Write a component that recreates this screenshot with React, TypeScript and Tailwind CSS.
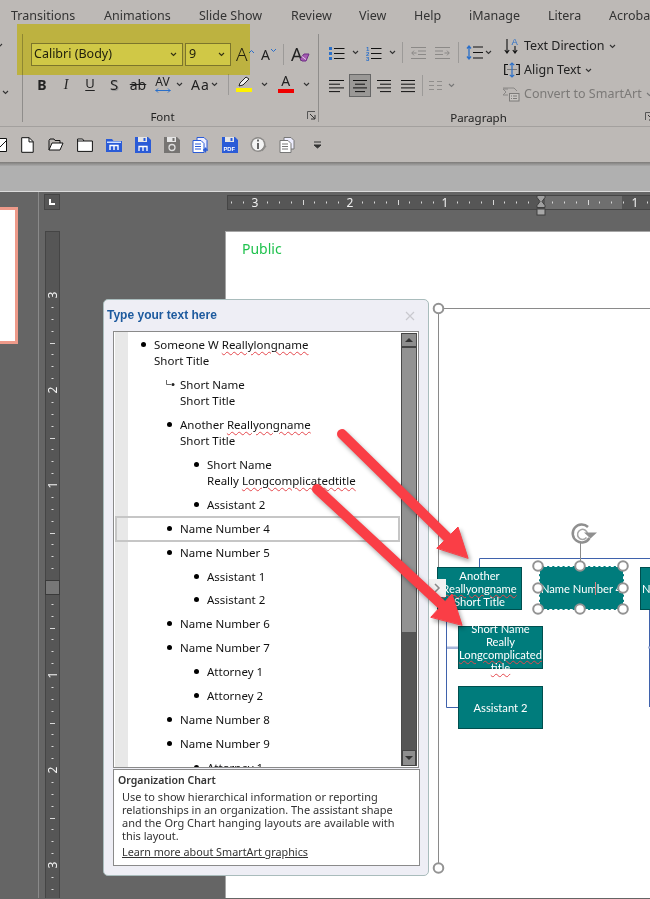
import type { ReactNode } from "react";

const ui = "font-['Noto_Sans',sans-serif]";
const dlg = "font-['Noto_Sans',sans-serif]";

const tabs: [string, number][] = [
  ["Transitions", 11],
  ["Animations", 104],
  ["Slide Show", 199],
  ["Review", 291],
  ["View", 359],
  ["Help", 414],
  ["iManage", 469],
  ["Litera", 548],
  ["Acrobat", 609],
];

function Chev({ color = "#333" }: { color?: string }) {
  return (
    <svg width="7" height="5" viewBox="0 0 7 5" className="shrink-0">
      <path d="M1 1l2.5 2.5L6 1" fill="none" stroke={color} strokeWidth="1.1" />
    </svg>
  );
}

function Sep({ h = "h-[21px]" }: { h?: string }) {
  return <div className={`w-px bg-[#9c9a98] shrink-0 ${h}`} />;
}

function Lines({ rows, color = "#111" }: { rows: [number, number][]; color?: string }) {
  return (
    <svg width="16" height="14" viewBox="0 0 16 14" className="shrink-0">
      {rows.map(([a, b], i) => (
        <rect key={i} x={a} y={1 + i * 3.7} width={b - a} height="1" fill={color} />
      ))}
    </svg>
  );
}

function Bullets() {
  return (
    <svg width="16" height="16" viewBox="0 0 16 16">
      {[2, 7, 12].map((y) => (
        <g key={y}>
          <rect x="0" y={y} width="3" height="3" fill="#2a6fc9" />
          <rect x="5" y={y + 1} width="10.5" height="1" fill="#111" />
        </g>
      ))}
    </svg>
  );
}

function Numbers() {
  return (
    <svg width="16" height="16" viewBox="0 0 16 16">
      {[1, 2, 3].map((n, i) => (
        <g key={n}>
          <text x="0" y={5.5 + i * 5} fontSize="6" fontWeight="700" fill="#2a6fc9" fontFamily="Liberation Sans">
            {n}
          </text>
          <rect x="5" y={3 + i * 5} width="10.5" height="1" fill="#111" />
        </g>
      ))}
    </svg>
  );
}

function Indent({ flip }: { flip?: boolean }) {
  return (
    <svg width="15" height="14" viewBox="0 0 15 14" className={flip ? "-scale-x-100" : ""}>
      <g fill="#8b8987">
        <rect x="0" y="1" width="15" height="1" />
        <rect x="7" y="4.5" width="8" height="1" />
        <rect x="7" y="8" width="8" height="1" />
        <rect x="0" y="12" width="15" height="1" />
      </g>
      <path d="M5.5 7H.8M3 4.6L.8 7 3 9.4" fill="none" stroke="#8b8987" strokeWidth="1" />
    </svg>
  );
}

function LineSpacing() {
  return (
    <svg width="18" height="17" viewBox="0 0 18 17">
      <path d="M3 2v13M1 4.5L3 2l2 2.5M1 12.5L3 15l2-2.5" fill="none" stroke="#2a6fc9" strokeWidth="1.3" />
      <g fill="#111">
        <rect x="7" y="2.5" width="10" height="1" />
        <rect x="7" y="8" width="10" height="1" />
        <rect x="7" y="13.5" width="10" height="1" />
      </g>
    </svg>
  );
}

function TextDir() {
  return (
    <svg width="16" height="18" viewBox="0 0 16 18">
      <path d="M3 2v14M.8 13l2.2 3 2.2-3M11 9v7M8.8 13l2.2 3 2.2-3" fill="none" stroke="#111" strokeWidth="1.1" />
      <text x="7.5" y="8" fontSize="9.5" fill="#2a6fc9" fontFamily="Liberation Sans">
        A
      </text>
    </svg>
  );
}

function AlignTextIcon() {
  return (
    <svg width="16" height="16" viewBox="0 0 16 16">
      <path d="M4 2.5H.7v10H4M12 2.5h3.3v10H12" fill="none" stroke="#111" strokeWidth="1.2" />
      <path d="M3 7.5h10" stroke="#777" strokeWidth="1" />
      <path d="M8 1v14M5.8 3.2L8 1l2.2 2.2M5.8 12.8L8 15l2.2-2.2" fill="none" stroke="#2a6fc9" strokeWidth="1.2" />
    </svg>
  );
}

function ConvertIcon() {
  return (
    <svg width="18" height="15" viewBox="0 0 18 15">
      <path d="M6 2H1l3 3-3 3h5" fill="none" stroke="#8a8886" strokeWidth="1" />
      <path d="M1 1h11l3 3" fill="none" stroke="#8a8886" strokeWidth="1" />
      <rect x="7.5" y="6.5" width="9.5" height="7.5" fill="#c8c5c2" stroke="#7d7b79" />
      <path d="M9 9h1M11 9h4M9 11.5h1M11 11.5h4" stroke="#7d7b79" />
    </svg>
  );
}

function Launcher() {
  return (
    <svg width="9" height="9" viewBox="0 0 9 9">
      <path d="M.5 8V.5H8" fill="none" stroke="#555" />
      <path d="M3 3l5 5M4 8h4V4" fill="none" stroke="#333" />
    </svg>
  );
}

function Eraser() {
  return (
    <svg width="11" height="9" viewBox="0 0 11 9" className="absolute right-[-2px] bottom-[2px]">
      <path d="M1 6l4-5h5L7 8H3z" fill="#a45bb0" stroke="#6f2d86" />
      <path d="M3 3.5l4 3" stroke="#e6cde9" />
    </svg>
  );
}

function Doc() {
  return (
    <svg width="13" height="16" viewBox="0 0 13 16">
      <path d="M.7.7h7.5l4 4v10.6H.7z" fill="#fff" stroke="#111" />
      <path d="M8 .7v4.2h4.2" fill="none" stroke="#111" />
    </svg>
  );
}

function OpenFolder() {
  return (
    <svg width="16" height="13" viewBox="0 0 16 13">
      <path d="M1 12V2.5l1-1.5h4l1 1.5h5v2.5" fill="none" stroke="#111" />
      <path d="M1 12l3-7h11l-3 7z" fill="#fff" stroke="#111" />
    </svg>
  );
}

function Folder() {
  return (
    <svg width="16" height="14" viewBox="0 0 16 14">
      <path d="M.6 13.4V1h5l1.3 2h8.5v10.4z" fill="#fff" stroke="#111" />
      <path d="M.6 3h6.3" stroke="#111" />
    </svg>
  );
}

function BlueFolderM() {
  return (
    <svg width="16" height="14" viewBox="0 0 16 14">
      <path d="M0 14V1h6l1.5 2H16v11z" fill="#2a5bd7" />
      <path d="M1 3.5h14V5H1z" fill="#cfe0ff" />
      <path d="M4 12V7.5h8V12M8 7.5V12" fill="none" stroke="#fff" strokeWidth="1.4" />
    </svg>
  );
}

function Floppy({ fill = "#2a5bd7", children }: { fill?: string; children?: ReactNode }) {
  return (
    <svg width="16" height="16" viewBox="0 0 16 16">
      <path d="M0 0h13l3 3v13H0z" fill={fill} />
      <rect x="3" y="0" width="9" height="5" fill="#e6e6e6" />
      <rect x="8.5" y="1" width="2" height="3" fill={fill} />
      {children}
    </svg>
  );
}

function CopyDoc({ plus }: { plus?: boolean }) {
  return (
    <svg width="17" height="16" viewBox="0 0 17 16">
      <path d="M5 .5h7l3 3V12H5z" fill="#eef" stroke={plus ? "#2a5bd7" : "#777"} />
      <path d="M1 3.5h8l3 3v9H1z" fill="#fff" stroke={plus ? "#2a5bd7" : "#777"} />
      <path d="M3 7h6M3 9.5h6M3 12h6" stroke={plus ? "#2a5bd7" : "#777"} />
      {plus && <path d="M13.5 10.5v5M11 13h5" stroke="#2a5bd7" strokeWidth="1.4" />}
    </svg>
  );
}

function Info() {
  return (
    <svg width="17" height="17" viewBox="0 0 17 17">
      <circle cx="8" cy="8.5" r="7.5" fill="#8d8b89" />
      <circle cx="8" cy="8.5" r="6" fill="#f4f4f4" />
      <rect x="7" y="3.5" width="2" height="2" fill="#666" />
      <rect x="7" y="7" width="2" height="6" fill="#666" />
      <path d="M11 14l4-5 1.5 1.2-4 5z" fill="#8d8b89" />
    </svg>
  );
}

function Ribbon() {
  return (
    <div className={`${ui} bg-[#bdb9b6] text-[#222]`}>
      <div className="relative h-6 text-[12.5px] leading-[31px] text-[#333]">
        {tabs.map(([t, x]) => (
          <span key={t} className="absolute top-0 whitespace-nowrap" style={{ left: x }}>
            {t}
          </span>
        ))}
      </div>
      <div className="flex h-[103px] border-b border-[#a3a09e]">
        <div className="w-[22px] flex flex-col pt-[19px] gap-[42px] pl-0.5">
          <div className="-ml-1.5"><Chev /></div>
          <div className="-ml-0"><Chev /></div>
        </div>
        {/* Font group */}
        <div className="w-[297px] shrink-0 mt-[10px] mb-1 border-x border-[#8f8d8b] relative flex flex-col">
          <div className="flex items-center pl-[8px] pt-[8px] h-[32px]">
            <div className="w-[152px] h-[23px] bg-[#d0d0c6] border border-[#7c7a78] flex items-center justify-between pl-[2px] pr-[5px] text-[12.5px]">
              <span>Calibri (Body)</span>
              <Chev />
            </div>
            <div className="ml-[2px] w-[46px] h-[23px] bg-[#d0d0c6] border border-[#7c7a78] flex items-center justify-between pl-[3px] pr-[5px] text-[12.5px]">
              <span>9</span>
              <Chev />
            </div>
            <div className="ml-[5px] w-[22px] flex items-start">
              <span className="text-[19px] leading-none font-light">A</span>
              <svg width="7" height="5" viewBox="0 0 7 5" className="mt-[4px]">
                <path d="M1 4l2.5-2.5L6 4" fill="none" stroke="#2a6fc9" />
              </svg>
            </div>
            <div className="ml-[3px] w-[20px] flex items-start">
              <span className="text-[14px] leading-none mt-0.5">A</span>
              <svg width="7" height="5" viewBox="0 0 7 5" className="mt-[2px]">
                <path d="M1 1l2.5 2.5L6 1" fill="none" stroke="#2a6fc9" />
              </svg>
            </div>
            <div className="ml-[2px]"><Sep /></div>
            <div className="ml-[7px] relative w-[17px] h-[20px] text-[18px] leading-[20px]">
              A
              <Eraser />
            </div>
          </div>
          <div className="flex items-center pl-[7px] mt-[6px] h-[24px]">
            <div className="w-6 text-center text-[14px] font-bold">B</div>
            <div className="w-6 text-center text-[14px] italic font-['Liberation_Serif',serif]">I</div>
            <div className="w-6 text-center text-[13px] underline underline-offset-2">U</div>
            <div className="w-6 text-center text-[15px] [text-shadow:1px_1px_0_#999]">S</div>
            <div className="w-6 text-center text-[14px] line-through">ab</div>
            <div className="w-[25px] flex flex-col items-center leading-none">
              <span className="text-[12px] leading-[12px]">AV</span>
              <svg width="16" height="5" viewBox="0 0 16 5">
                <path d="M.5 2.5h15M3 .5l-2 2 2 2M13 .5l2 2-2 2" fill="none" stroke="#2a6fc9" />
              </svg>
            </div>
            <div className="ml-px"><Chev /></div>
            <div className="ml-[8px] text-[14px] tracking-[1px]">Aa</div>
            <div className="ml-px"><Chev /></div>
            <div className="ml-[10px]"><Sep /></div>
            <div className="ml-[7px] w-4 flex flex-col items-center">
              <svg width="14" height="12" viewBox="0 0 14 12">
                <path d="M2 10l1-3 6-6 3 2-6 6z" fill="#f2f2f2" stroke="#222" />
              </svg>
              <div className="w-4 h-1 bg-[#fff200]" />
            </div>
            <div className="ml-[9px]"><Chev /></div>
            <div className="ml-[10px] w-4 flex flex-col items-center">
              <span className="text-[14px] leading-[12px]">A</span>
              <div className="w-4 h-1 bg-[#f00000] mt-0.5" />
            </div>
            <div className="ml-[9px]"><Chev /></div>
          </div>
          <div className="relative top-[3px] mt-auto h-[17px] text-center text-[11.5px] leading-[17px] pr-[16px]">
            Font
            <div className="absolute right-[2px] top-[3px]"><Launcher /></div>
          </div>
        </div>
        {/* Paragraph group */}
        <div className="flex-1 min-w-0 mt-[10px] mb-1 relative flex flex-col">
          <div className="flex flex-1">
            <div className="flex flex-col pl-[10px] w-[185px] shrink-0">
              <div className="flex items-center h-[21px] mt-[8px]">
                <Bullets />
                <div className="ml-[7px]"><Chev /></div>
                <div className="ml-[7px]"><Numbers /></div>
                <div className="ml-[7px]"><Chev /></div>
                <div className="ml-[6px]"><Sep /></div>
                <div className="ml-[8px]"><Indent /></div>
                <div className="ml-[9px]"><Indent flip /></div>
                <div className="ml-[8px]"><Sep /></div>
                <div className="ml-[7px]"><LineSpacing /></div>
                <div className="ml-[1px]"><Chev /></div>
              </div>
              <div className="flex items-center h-[23px] mt-[11px] gap-[6px]">
                <Lines rows={[[0, 15], [0, 11], [0, 15], [0, 11]]} />
                <div className="w-[22px] h-[23px] bg-[#9a9896] border border-[#666] flex items-center justify-center -ml-[2px]">
                  <Lines rows={[[1, 15], [3, 13], [1, 15], [3, 13]]} />
                </div>
                <div className="ml-[-1px]"><Lines rows={[[1, 15], [4, 15], [1, 15], [4, 15]]} /></div>
                <div className="ml-[2px]"><Lines rows={[[1, 15], [1, 15], [1, 15], [1, 15]]} /></div>
                <Sep />
                <svg width="13" height="9" viewBox="0 0 13 9">
                  <path d="M0 .5h5M0 4.500h5M0 8.500h5M8 .5h5M8 4.500h5M8 8.500h5" stroke="#8f8d8b" />
                </svg>
                <Chev color="#777" />
              </div>
            </div>
            <div className="flex flex-col text-[12.5px] leading-[24px] whitespace-nowrap">
              <div className="flex items-center gap-[4px] h-[24px]">
                <TextDir />
                <span>Text Direction</span>
                <Chev />
              </div>
              <div className="flex items-center gap-[4px] h-[24px]">
                <AlignTextIcon />
                <span>Align Text</span>
                <Chev />
              </div>
              <div className="flex items-center gap-[4px] h-[24px] text-[#7b7977] -ml-0.5">
                <ConvertIcon />
                <span>Convert to SmartArt</span>
                <Chev color="#777" />
              </div>
            </div>
          </div>
          <div className="relative top-[3px] h-[17px] text-center text-[11.5px] leading-[17px] pr-[12px]">
            Paragraph
            <div className="absolute right-[-4px] top-[3px]"><Launcher /></div>
          </div>
        </div>
      </div>
      <div className="h-[35px] flex items-center">
        <svg width="7" height="14" viewBox="0 0 7 14" className="shrink-0">
          <path d="M0 .5h6.500v13H0M0 9l6-6" fill="#fff" stroke="#111" />
        </svg>
        <div className="ml-[14px] flex items-center">
          {[<Doc />, <OpenFolder />, <Folder />, <BlueFolderM />,
            <Floppy><path d="M4 14V9.500h8V14M8 9.500V14" fill="none" stroke="#fff" strokeWidth="1.3" /></Floppy>,
            <Floppy fill="#767472"><circle cx="8" cy="10.5" r="3" fill="none" stroke="#ddd" strokeWidth="1.3" /></Floppy>,
            <CopyDoc plus />,
            <Floppy><text x="1.5" y="14" fontSize="5.8" fontWeight="700" fill="#fff" fontFamily="Liberation Sans">PDF</text></Floppy>,
            <Info />, <CopyDoc />].map((icon, i) => (
            <div key={i} className={`flex justify-center ${i === 0 ? "w-[13px]" : i === 1 ? "w-[16px] ml-[14px]" : "w-[29px]"} ${i === 2 ? "ml-[6px]" : ""}`}>
              {icon}
            </div>
          ))}
        </div>
        <svg width="9" height="8" viewBox="0 0 9 8" className="ml-[11px]">
          <path d="M1 1h7M1 4l3.500 3L8 4z" fill="#333" stroke="#333" />
        </svg>
      </div>
      <div className="h-[4px] bg-gradient-to-b from-[#7d7b79] to-[#a9a9a9]" />
    </div>
  );
}

function HRuler() {
  const start = 227;
  const ticks = [];
  for (let i = -32; i <= 12; i++) {
    const x = 540 + i * 11.875 - start;
    if (x < 0 || x > 424) continue;
    const c = i % 8 === 0;
    const half = Math.abs(i % 4) === 0;
    if (c && i !== 0) {
      ticks.push(
        <text key={i} x={x} y="12" fontSize="12" fill="#f0f0f0" textAnchor="middle" fontFamily="Noto Sans">
          {Math.abs(i / 8)}
        </text>
      );
    } else if (!c) {
      ticks.push(<rect key={i} x={Math.round(x)} y={half ? 5 : 6.5} width="1" height={half ? 5 : 2} fill="#d8d8d8" />);
    }
  }
  return (
    <svg width="423" height="21" className="block overflow-visible">
      <rect width="423" height="15" fill="#565656" />
      <rect x="318" y="0.5" width="77" height="14" fill="#6f6f6f" />
      <rect x="0.5" y="0.5" width="423" height="14" fill="none" stroke="#454545" />
      <g>{ticks}</g>
      <path d="M310 0.500h8v2l-3 4 3 4v2h-8v-2l3-4-3-4z" fill="#a0a0a0" stroke="#3f3f3f" />
      <rect x="310" y="14" width="8" height="6" fill="#a8a8a8" stroke="#3f3f3f" />
    </svg>
  );
}

function VRuler() {
  const ticks = [];
  for (let i = -24; i <= 26; i++) {
    const y = 581 + i * 11.875 - 232;
    const c = i % 8 === 0;
    const half = Math.abs(i % 4) === 0;
    if (c && i !== 0) {
      ticks.push(
        <text key={i} x="0" y="0" fontSize="12" fill="#f0f0f0" textAnchor="middle" fontFamily="Noto Sans"
          transform={`translate(11.500 ${y}) rotate(-90)`}>
          {Math.abs(i / 8)}
        </text>
      );
    } else if (!c) {
      ticks.push(<rect key={i} x={half ? 5 : 6.5} y={Math.round(y)} width={half ? 5 : 2} height="1" fill="#d8d8d8" />);
    }
  }
  return (
    <svg width="15" height="667" className="block">
      <rect width="15" height="667" fill="#565656" />
      <rect x="0.500" y="0.500" width="14" height="667" fill="none" stroke="#454545" />
      <g>{ticks}</g>
      <rect x="0.500" y="349.500" width="14" height="14" fill="#777" stroke="#3a3a3a" />
    </svg>
  );
}

function Wavy({ children }: { children: ReactNode }) {
  return (
    <span className="underline decoration-wavy decoration-[#e5484d] decoration-1 underline-offset-2">
      {children}
    </span>
  );
}

type Row = { lvl: 1 | 2 | 3; lines: ReactNode[]; hang?: boolean; sel?: boolean; nudge?: boolean };

const rows: Row[] = [
  { lvl: 1, lines: [<>Someone W <Wavy>Reallylongname</Wavy></>, "Short Title"] },
  { lvl: 2, lines: ["Short Name", "Short Title"], hang: true },
  { lvl: 2, lines: [<>Another <Wavy>Reallyongname</Wavy></>, "Short Title"] },
  { lvl: 3, lines: ["Short Name", <>Really <Wavy>Longcomplicatedtitle</Wavy></>] },
  { lvl: 3, lines: ["Assistant 2"] },
  { lvl: 2, lines: ["Name Number 4"], sel: true },
  { lvl: 2, lines: ["Name Number 5"] },
  { lvl: 3, lines: ["Assistant 1"] },
  { lvl: 3, lines: ["Assistant 2"], nudge: true },
  { lvl: 2, lines: ["Name Number 6"] },
  { lvl: 2, lines: ["Name Number 7"] },
  { lvl: 3, lines: ["Attorney 1"] },
  { lvl: 3, lines: ["Attorney 2"] },
  { lvl: 2, lines: ["Name Number 8"] },
  { lvl: 2, lines: ["Name Number 9"] },
  { lvl: 3, lines: ["Attorney 1"] },
];

const indent = { 1: "pl-[40px]", 2: "pl-[66px]", 3: "pl-[93px]" };

function OutlineRow({ row }: { row: Row }) {
  return (
    <div className={`relative py-1 leading-4 whitespace-nowrap ${indent[row.lvl]} ${row.nudge ? "-mt-px" : ""}`}>
      {row.sel && <div className="absolute left-px top-[-1px] bottom-[-1px] border-2 border-[#c6c6c6] w-[285px]" />}
      <div className="relative">
        {row.hang ? (
          <svg width="10" height="8" viewBox="0 0 10 8" className="absolute left-[-14px] top-[3px]">
            <path d="M.5 0v4.500H5" fill="none" stroke="#666" />
            <circle cx="7" cy="4.500" r="1.500" fill="#222" />
          </svg>
        ) : (
          <div className="absolute left-[-13px] top-[5px] size-[5px] rounded-full bg-black" />
        )}
        {row.lines.map((l, i) => (
          <div key={i}>{l}</div>
        ))}
      </div>
    </div>
  );
}

function TextPane() {
  return (
    <div className={`${dlg} absolute left-[103px] top-[299px] w-[326px] h-[577px] bg-[#eeeef5] border border-[#a9bcbc] rounded-[5px] flex flex-col px-[9px]`}>
      <div className="h-[31px] flex items-center justify-between pr-[3px]">
        <span className="font-['Liberation_Sans',sans-serif] font-bold text-[12px] text-[#1d5a9e] -ml-[6px] -mt-0.5">Type your text here</span>
        <svg width="10" height="10" viewBox="0 0 10 10" className="mr-[1px]">
          <path d="M1 1l8 8M9 1L1 9" stroke="#c9c9cf" strokeWidth="1.2" />
        </svg>
      </div>
      <div className="h-[437px] bg-white border border-[#8a8a8a] flex overflow-hidden relative text-[11.5px] text-[#111]">
        <div className="absolute left-[1px] top-0 bottom-0 w-[13px] bg-[#e8e8e8]" />
        <div className="relative flex-1 pt-[1px] overflow-hidden">
          {rows.map((r, i) => (
            <OutlineRow key={i} row={r} />
          ))}
        </div>
        <div className="w-[16px] mr-[1px] my-px flex flex-col border-x border-[#4a4a4a] shrink-0">
          <div className="h-[15px] bg-[#8e8e8e] border-b-2 border-[#444] border-t border-t-[#444] flex items-center justify-center">
            <div className="border-x-[4px] border-x-transparent border-b-[4px] border-b-[#333]" />
          </div>
          <div className="h-[284px] bg-[#929292]" />
          <div className="flex-1 bg-[#555]" />
          <div className="h-[16px] bg-[#8e8e8e] border border-[#444] flex items-center justify-center">
            <div className="border-x-[4px] border-x-transparent border-t-[4px] border-t-[#333]" />
          </div>
        </div>
      </div>
      <div className="mt-[1px] h-[97px] bg-white border border-[#8a8a8a] -mr-px px-1 pt-[4px] text-[11px] leading-[13px] text-[#333] whitespace-nowrap">
        <div className="font-semibold text-[10.5px] text-[#333] mb-[3px]">Organization Chart</div>
        <div className="pl-1">Use to show hierarchical information or reporting</div>
        <div className="pl-1">relationships in an organization. The assistant shape</div>
        <div className="pl-1">and the Org Chart hanging layouts are available with</div>
        <div className="pl-1">this layout.</div>
        <div className="pl-1 mt-[3px] underline text-[10.8px]">Learn more about SmartArt graphics</div>
      </div>
    </div>
  );
}

const handles: [number, number][] = [
  [538, 566], [580, 566], [623, 566], [538, 588], [623, 588], [538, 609], [580, 609], [623, 609],
];

function Node({ x, y, w, h, children, selected }: { x: number; y: number; w: number; h: number; children: ReactNode; selected?: boolean }) {
  return (
    <div
      className={`absolute bg-[#007c7c] flex flex-col items-center justify-center text-center text-white text-[11.2px] leading-[13px] whitespace-nowrap font-['Lato',sans-serif] ${selected ? "border border-dashed border-white" : "border border-[#004f4f]"}`}
      style={{ left: x, top: y, width: w, height: h }}
    >
      {children}
    </div>
  );
}

function OrgChart() {
  return (
    <div className={`${ui} absolute inset-0`}>
      <svg width="650" height="899" className="absolute inset-0">
        <path d="M438.500 308.500H650M438.500 308.500V868" fill="none" stroke="#8a8a8a" />
        <path d="M479.500 567V558.500H650M446.500 610V707.500H458M446.500 648H458M649.500 610V707" fill="none" stroke="#3f62ac" />
        <path d="M447 647.500H458M648 647.500H650" stroke="#a9b8dc" strokeWidth="2" />
      </svg>
      <Node x={437} y={567} w={85} h={43}>
        <span>Another</span>
        <span className="underline decoration-wavy decoration-[#e5484d] decoration-1">Reallyongname</span>
        <span>Short Title</span>
      </Node>
      <Node x={539} y={566} w={85} h={44} selected>
        <span>Name Number 4</span>
        <div className="absolute left-[55px] top-[15px] w-px h-[13px] bg-[#e08080]" />
      </Node>
      <Node x={640} y={567} w={30} h={43}>
        <span className="self-start pl-px">Name</span>
      </Node>
      <Node x={458} y={626} w={85} h={43}>
        <span>Short Name</span>
        <span>Really</span>
        <span className="underline decoration-wavy decoration-[#e5484d] decoration-1">Longcomplicated</span>
        <span className="underline decoration-wavy decoration-[#e5484d] decoration-1">title</span>
      </Node>
      <Node x={458} y={686} w={85} h={43}>
        <span>Assistant 2</span>
      </Node>
      <svg width="650" height="899" className="absolute inset-0">
        <path d="M580.500 543V566" stroke="#8a8a8a" />
        <path d="M588 527a9 9 0 1 0 1.500 11" fill="none" stroke="#8f8f8f" strokeWidth="2.500" />
        <path d="M587.500 533.500a5 5 0 1 0-1 4" fill="none" stroke="#a5a5a5" strokeWidth="1.500" />
        <path d="M584 532.500h13l-6.500 6z" fill="#8f8f8f" />
        {handles.map(([x, y]) => (
          <circle key={`${x}-${y}`} cx={x} cy={y} r="4.800" fill="#fff" stroke="#939393" strokeWidth="2" />
        ))}
        <circle cx="438.500" cy="308.500" r="4.800" fill="#fff" stroke="#939393" strokeWidth="2" />
        <circle cx="438.500" cy="868" r="4.800" fill="#fff" stroke="#939393" strokeWidth="2" />
      </svg>
      <div className="absolute left-[428px] top-[579px] w-[18px] h-[18px] bg-[#f1f1f1] flex items-center justify-center">
        <svg width="8" height="10" viewBox="0 0 8 10">
          <path d="M2 1l4 4-4 4" fill="none" stroke="#888" strokeWidth="1.500" />
        </svg>
      </div>
    </div>
  );
}

function Arrows() {
  return (
    <svg width="650" height="899" className="absolute inset-0 drop-shadow-[2px_3px_2px_rgba(0,0,0,0.35)]">
      <g fill="#fa3e46" stroke="#fa3e46" strokeLinecap="round">
        <path d="M342 434L447 537" strokeWidth="10" />
        <path d="M468 558L458 527L437 548z" strokeWidth="1" />
        <path d="M317 489L441 604" strokeWidth="10" />
        <path d="M462 625L452 594L431 617z" strokeWidth="1" />
      </g>
    </svg>
  );
}

export default function App() {
  return (
    <div className="relative w-[650px] h-[899px] overflow-hidden bg-[#656565]">
      <Ribbon />
      <div className="h-[26px] bg-[#b0b0b0] border-b border-[#dcdcdc]" />
      <div className="flex h-[706px]">
        <div className="w-[38px] pt-[15px] shrink-0">
          <div className="w-[18px] h-[137px] bg-white border-y-[3px] border-r-[3px] border-[#ee9a8a]" />
        </div>
        <div className="w-px bg-[#8a8a8a] shrink-0" />
        <div className="flex-1 flex flex-col">
          <div className="flex h-[39px] pt-[3px] items-start">
            <div className="ml-[5px] -mt-px w-[16px] h-[16px] bg-[#565656] border border-[#454545] flex items-center justify-center">
              <div className="w-[6px] h-[6px] border-l-2 border-b-2 border-white" />
            </div>
            <div className="ml-[167px]">
              <HRuler />
            </div>
          </div>
          <div className="flex flex-1">
            <div className="ml-[6px]">
              <VRuler />
            </div>
            <div className={`${ui} ml-[165px] flex-1 bg-white border-l border-t border-[#a5a5a5] pl-[16px] pt-[6px] text-[14px] text-[#1fc24d]`}>
              Public
            </div>
          </div>
        </div>
      </div>
      <OrgChart />
      <TextPane />
      <div className="absolute left-[17px] top-[24px] w-[233px] h-[51px] bg-[#fff55a] mix-blend-multiply" />
      <Arrows />
    </div>
  );
}
